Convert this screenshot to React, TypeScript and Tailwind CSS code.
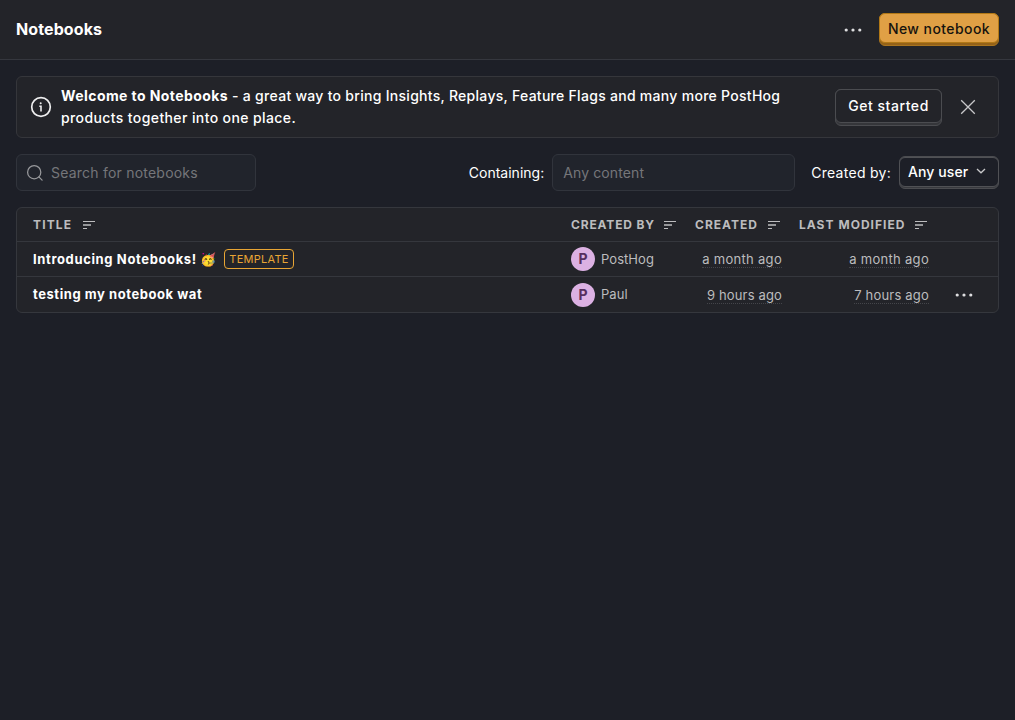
import React from "react";

function DotsIcon({ className }: { className: string }) {
  return (
    <svg viewBox="0 0 20 20" className={className} fill="currentColor">
      <circle cx="3.2" cy="10" r="1.6" />
      <circle cx="10" cy="10" r="1.6" />
      <circle cx="16.8" cy="10" r="1.6" />
    </svg>
  );
}

function InfoIcon() {
  return (
    <svg viewBox="0 0 24 24" className="size-6 shrink-0 text-[#eeeeef]" fill="none" stroke="currentColor">
      <circle cx="12" cy="12" r="9.3" strokeWidth="1.7" />
      <path d="M10.3 11.2H12V16.6" strokeWidth="1.6" />
      <circle cx="11.7" cy="8.2" r="1" fill="currentColor" stroke="none" />
    </svg>
  );
}

function SortIcon() {
  return (
    <svg viewBox="0 0 12 8" className="h-2 w-3 shrink-0" fill="currentColor" shapeRendering="crispEdges">
      <rect x="0" y="0" width="12" height="1" />
      <rect x="0" y="3" width="8" height="2" opacity="0.75" />
      <rect x="0" y="7" width="4" height="1" />
    </svg>
  );
}

function SearchIcon() {
  return (
    <svg viewBox="0 0 18 18" className="size-[18px] shrink-0 text-[#98999c]" fill="none" stroke="currentColor" strokeWidth="1.25" strokeLinecap="round">
      <circle cx="8.2" cy="8.2" r="6.6" />
      <path d="M12.9 12.9L16.1 16.1" />
    </svg>
  );
}

function HeaderCell({ label, className }: { label: string; className: string }) {
  return (
    <div className={`flex items-center text-[12px] leading-4 font-bold text-[#bcbcbe] ${className}`}>
      <span className="whitespace-nowrap">{label}</span>
      <SortIcon />
    </div>
  );
}

function Person({ name, className = "" }: { name: string; className?: string }) {
  return (
    <div className="flex w-[115px] items-center gap-1.5">
      <span className="flex size-6 items-center justify-center rounded-full bg-[#dcb1e3] text-[14px] leading-none font-bold text-[#572e5e]">P</span>
      <span className={`text-[13px] leading-5 tracking-[0.05px] text-[#bcbcbe] ${className}`}>{name}</span>
    </div>
  );
}

function Time({ value, className }: { value: string; className: string }) {
  return (
    <div className={`flex justify-end ${className}`}>
      <span className="border-b border-dotted border-[#44454a] text-[13px] leading-4 whitespace-nowrap text-[#bcbcbe]">{value}</span>
    </div>
  );
}

export default function App() {
  return (
    <div className="min-h-screen bg-[#1d1f27] font-['Inter','Noto_Color_Emoji',sans-serif] text-[14px] text-white">
      <header className="flex h-[60px] items-center justify-between border-b border-[#35373e] bg-[#232429] px-4">
        <h1 className="pb-0.5 text-[16px] leading-6 font-bold tracking-[0.1px]">Notebooks</h1>
        <div className="flex items-center gap-4">
          <button className="flex size-5 items-center justify-center text-[#dedee0]">
            <DotsIcon className="size-5" />
          </button>
          <button className="h-[33px] w-[120px] rounded-md border border-[#a9741f] bg-[#956218]">
            <span className="-mx-px -mt-px mb-[2px] flex h-[30px] items-center justify-center rounded-md border border-[#b17816] bg-[#e0a045] font-medium tracking-[0.42px] whitespace-nowrap text-[#15130e]">New notebook</span>
          </button>
        </div>
      </header>

      <main className="px-4 pt-4">
        <section className="flex h-[62px] items-center rounded-md border border-[#35363b] bg-[#232429] pr-5 pl-3">
          <InfoIcon />
          <p className="ml-2 w-[740px] leading-[22px] font-medium tracking-[0.285px]">
            <strong className="font-bold tracking-[0.42px]">Welcome to Notebooks</strong> - a great way to bring Insights, Replays, Feature Flags and many more PostHog
            <br />
            <span className="tracking-[0.39px]">products together into one place.</span>
          </p>
          <button className="ml-auto h-[37px] w-[107px] shrink-0 rounded-md border border-[#4b4c50] bg-[#35363a]">
            <span className="-mx-px -mt-px mb-px flex h-[34px] items-center justify-center rounded-md border border-[#4b4c50] bg-[#232429] pb-px font-medium tracking-[0.55px]">Get started</span>
          </button>
          <button className="ml-4 flex size-5 shrink-0 items-center justify-center text-[#c8c8ca]">
            <svg viewBox="0 0 16 16" className="size-4" fill="none" stroke="currentColor" strokeWidth="1.3">
              <path d="M1.2 1.2L14.8 14.8M14.8 1.2L1.2 14.8" />
            </svg>
          </button>
        </section>

        <div className="mt-4 flex h-[37px] items-center justify-between">
          <label className="flex h-[37px] w-[240px] items-center gap-[7px] rounded-md border border-[#31343c] bg-[#21242c] pl-[9px]">
            <SearchIcon />
            <input className="w-44 bg-transparent tracking-[0.22px] outline-none placeholder:text-[#75767a]" placeholder="Search for notebooks" />
          </label>
          <div className="flex items-center">
            <span>Containing:</span>
            <input className="ml-2 h-[37px] w-[243px] rounded-md border border-[#31343c] bg-[#21242c] px-2.5 tracking-[0.12px] outline-none placeholder:text-[#75767a]" placeholder="Any content" />
            <span className="ml-4 tracking-[0.28px]">Created by:</span>
            <button className="ml-2 h-[33px] w-[100px] rounded-md border border-[#4b4c50] bg-[#393a3f]">
              <span className="-mx-px -mt-px mb-px flex h-[30px] items-center justify-between rounded-md border border-[#505155] bg-[#1d1f27] pr-3 pl-2 font-medium tracking-[0.1px]">
                Any user
                <svg viewBox="0 0 10 6" className="mb-0.5 h-1.5 w-2.5" fill="none" stroke="#c8c8ca" strokeWidth="1.3">
                  <path d="M1 1L5 4.8L9 1" />
                </svg>
              </span>
            </button>
          </div>
        </div>

        <section className="mt-4 overflow-hidden rounded-md border border-[#35373d] bg-[#232429]">
          <div className="flex h-[34px] items-center border-b border-[#35373d] pl-4">
            <HeaderCell label="TITLE" className="w-[62px] justify-between tracking-[1.15px]" />
            <HeaderCell label="CREATED BY" className="ml-[476px] w-[105px] justify-between tracking-[0.85px]" />
            <HeaderCell label="CREATED" className="ml-[19px] w-[85px] justify-between tracking-[1px]" />
            <HeaderCell label="LAST MODIFIED" className="ml-[19px] w-[128px] justify-between tracking-[1.03px]" />
          </div>
          <div className="flex h-[35px] items-center border-b border-[#35373d] pl-4">
            <div className="flex w-[538px] items-center">
              <span className="w-[191px] pt-px text-[13px] font-bold tracking-[0.63px] whitespace-nowrap">Introducing Notebooks! 🥳</span>
              <span className="flex h-5 w-[70px] items-center justify-center rounded border border-[#e8a534] text-[11px] leading-none tracking-[0.25px] text-[#e8a534]">TEMPLATE</span>
            </div>
            <Person name="PostHog" />
            <Time value="a month ago" className="w-[96px] tracking-[0.3px]" />
            <Time value="a month ago" className="w-[147px] tracking-[0.3px]" />
          </div>
          <div className="flex h-[35px] items-center pl-4">
            <div className="w-[538px] text-[13px] font-bold tracking-[0.56px]">testing my notebook wat</div>
            <Person name="Paul" className="pb-0.5" />
            <Time value="9 hours ago" className="w-[96px] pt-0.5 tracking-[0.15px]" />
            <Time value="7 hours ago" className="w-[147px] pt-0.5 tracking-[0.2px]" />
            <button className="ml-[25px] text-[#dedee0]">
              <DotsIcon className="size-5" />
            </button>
          </div>
        </section>
      </main>
    </div>
  );
}
